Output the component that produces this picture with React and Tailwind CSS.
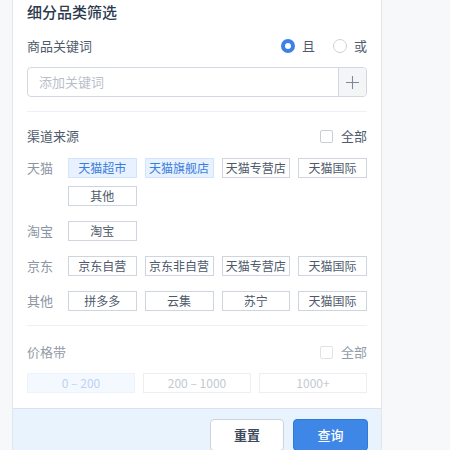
import React from "react";

const font = { fontFamily: '"Noto Sans CJK SC", "Noto Sans", sans-serif' };

function Chip({ children, active }) {
  return (
    <div
      className={
        "h-[20px] flex items-center justify-center text-[12px] leading-none border " +
        (active
          ? "bg-[#e8f2fe] border-[#d3e5fc] text-[#3b7ddd]"
          : "bg-white border-[#cfd5de] text-[#4e5a6b]")
      }
    >
      {children}
    </div>
  );
}

function Group({ label, items, mt }) {
  return (
    <div className={"flex " + mt}>
      <div className="w-[41px] h-[20px] flex items-center text-[13px] text-[#8c95a3] shrink-0">
        {label}
      </div>
      <div className="flex-1 grid grid-cols-4 gap-x-[8px] gap-y-[8px]">
        {items.map((it, i) => (
          <Chip key={i} active={it.active}>
            {it.t}
          </Chip>
        ))}
      </div>
    </div>
  );
}

function Checkbox({ light }) {
  return (
    <span
      className={
        "w-[13px] h-[13px] rounded-[2px] border bg-white inline-block " +
        (light ? "border-[#dfe3e9]" : "border-[#c9ced7]")
      }
    />
  );
}

export default function App() {
  return (
    <div className="w-[450px] h-[450px] overflow-hidden bg-[#f7f8fa] flex" style={font}>
      <div className="ml-[12px] w-[370px] h-[470px] bg-white border-x border-[#e2e5ea] flex flex-col">
        <div className="px-[14px]">
          <div className="h-[24px] flex items-center text-[15px] font-medium text-[#2b3a4e]">
            细分品类筛选
          </div>

          <div className="mt-[12px] h-[20px] flex items-center">
            <div className="text-[13px] text-[#4f5b6b]">商品关键词</div>
            <div className="ml-auto flex items-center">
              <span className="w-[14px] h-[14px] rounded-full border-[4px] border-[#3b82e8] bg-white" />
              <span className="ml-[7px] text-[13px] text-[#4f5b6b]">且</span>
              <span className="ml-[18px] w-[14px] h-[14px] rounded-full border border-[#cdd2da] bg-white" />
              <span className="ml-[7px] text-[13px] text-[#4f5b6b]">或</span>
            </div>
          </div>

          <div className="mt-[11px] h-[30px] flex border border-[#d3d8e0] rounded-[4px] overflow-hidden">
            <div className="flex-1 flex items-center pl-[11px] text-[13px] text-[#b9bfc9]">
              添加关键词
            </div>
            <div className="w-[28px] bg-[#f4f5f7] border-l border-[#d3d8e0] flex items-center justify-center">
              <svg width="15" height="15" viewBox="0 0 15 15">
                <path d="M7.5 1v13M1 7.5h13" stroke="#7e8a9b" strokeWidth="1.1" />
              </svg>
            </div>
          </div>

          <div className="mt-[14px] border-t border-[#eef0f3]" />

          <div className="mt-[14px] h-[20px] flex items-center">
            <div className="text-[13px] text-[#4f5b6b]">渠道来源</div>
            <div className="ml-auto flex items-center">
              <Checkbox />
              <span className="ml-[8px] text-[13px] text-[#4f5b6b]">全部</span>
            </div>
          </div>

          <Group
            mt="mt-[12px]"
            label="天猫"
            items={[
              { t: "天猫超市", active: true },
              { t: "天猫旗舰店", active: true },
              { t: "天猫专营店" },
              { t: "天猫国际" },
              { t: "其他" },
            ]}
          />
          <Group mt="mt-[15px]" label="淘宝" items={[{ t: "淘宝" }]} />
          <Group
            mt="mt-[15px]"
            label="京东"
            items={[{ t: "京东自营" }, { t: "京东非自营" }, { t: "天猫专营店" }, { t: "天猫国际" }]}
          />
          <Group
            mt="mt-[15px]"
            label="其他"
            items={[{ t: "拼多多" }, { t: "云集" }, { t: "苏宁" }, { t: "天猫国际" }]}
          />

          <div className="mt-[14px] border-t border-[#eef0f3]" />

          <div className="mt-[16px] h-[20px] flex items-center">
            <div className="text-[13px] text-[#939ca8]">价格带</div>
            <div className="ml-auto flex items-center">
              <Checkbox light />
              <span className="ml-[8px] text-[13px] text-[#939ca8]">全部</span>
            </div>
          </div>

          <div className="mt-[11px] grid grid-cols-3 gap-x-[8px]">
            <div className="h-[20px] flex items-center justify-center text-[12px] bg-[#f4f8ff] border border-[#edf3fd] text-[#bcd3f3]">
              0 – 200
            </div>
            <div className="h-[20px] flex items-center justify-center text-[12px] bg-white border border-[#eceef2] text-[#c4c9d1]">
              200 – 1000
            </div>
            <div className="h-[20px] flex items-center justify-center text-[12px] bg-white border border-[#eceef2] text-[#c4c9d1]">
              1000+
            </div>
          </div>
        </div>

        <div className="mt-[15px] flex-1 bg-[#e9f3fe] border-t border-[#dde2ea] px-[13px] pt-[10px] flex justify-end gap-[9px]">
          <button className="w-[74px] h-[32px] rounded-[4px] bg-white border border-[#cdd3dc] text-[13px] font-bold text-[#3d4a5c]">
            重置
          </button>
          <button className="w-[75px] h-[32px] rounded-[4px] bg-[#3e87e6] border border-[#2f79dc] text-[13px] font-medium text-white">
            查询
          </button>
        </div>
      </div>
    </div>
  );
}
